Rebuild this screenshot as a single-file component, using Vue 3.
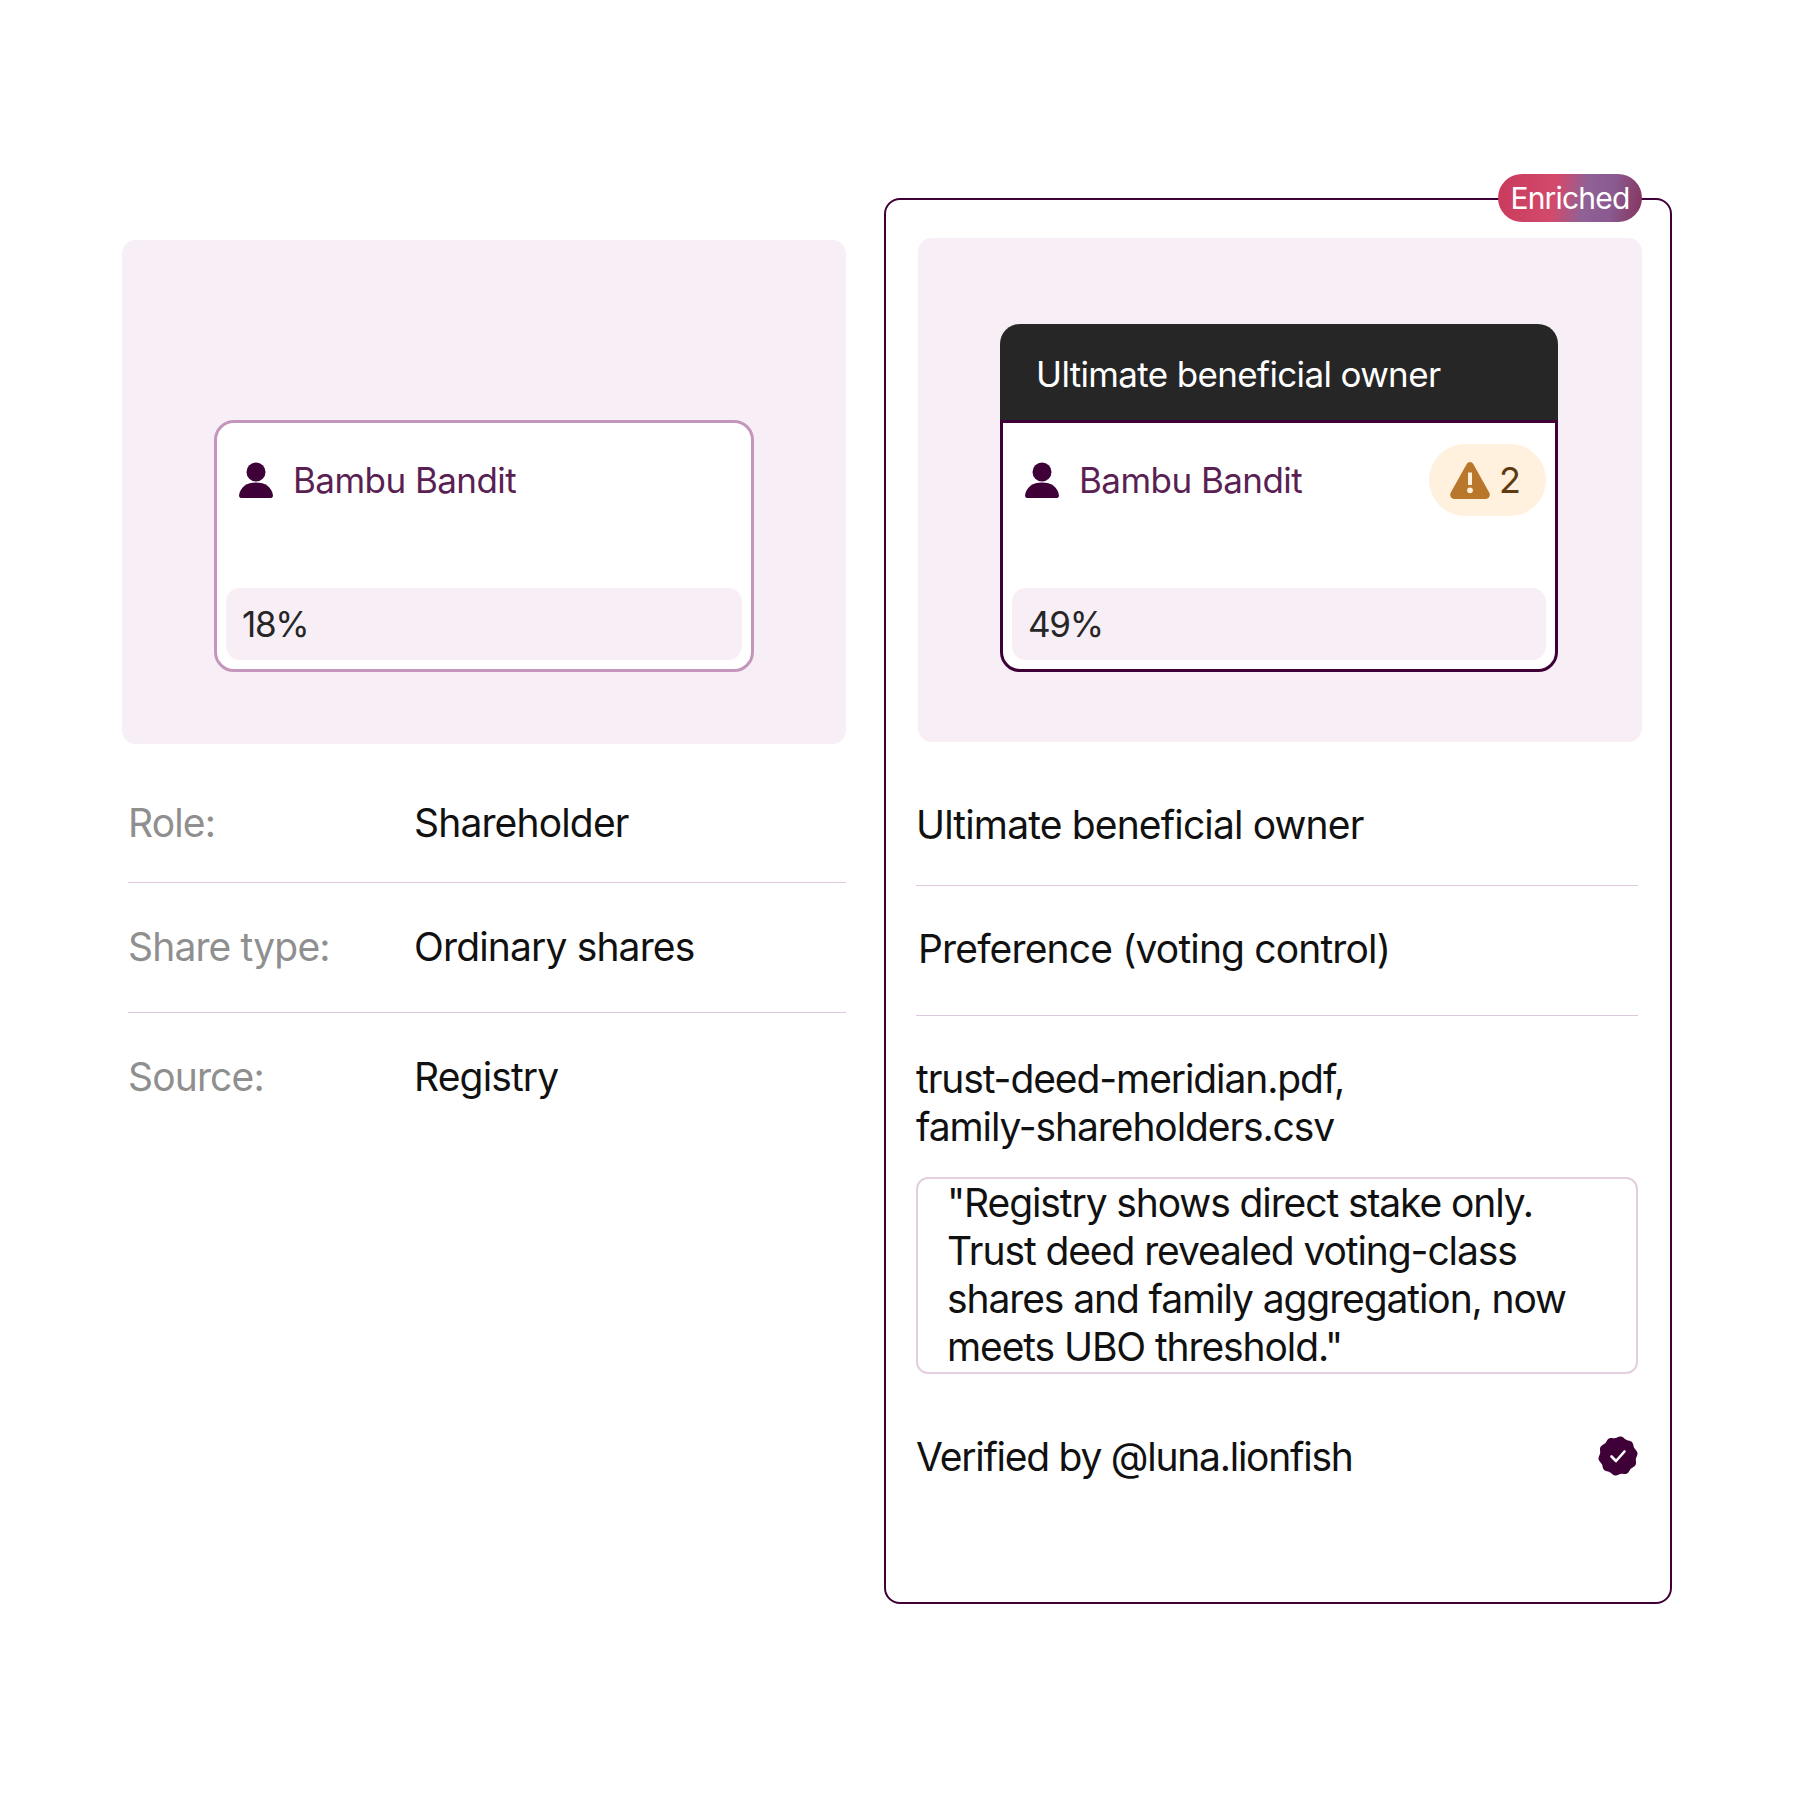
<script setup>
import { computed } from "vue";

// scalloped edge of the verified badge
const sealPath = computed(() => {
  const pts = [];
  for (let i = 0; i < 120; i++) {
    const a = (i / 120) * Math.PI * 2;
    const r = 18.9 + 0.8 * Math.cos(a * 10 + Math.PI / 2);
    pts.push((20 + r * Math.cos(a)).toFixed(2) + " " + (20 + r * Math.sin(a)).toFixed(2));
  }
  return "M" + pts.join("L") + "Z";
});

const rows = [
  { label: "Role:", value: "Shareholder" },
  { label: "Share type:", value: "Ordinary shares" },
  { label: "Source:", value: "Registry" },
];
</script>

<template>
  <div class="page">
    <div class="col-left">
      <div class="panel">
        <div class="card card-light">
          <div class="person">
            <svg class="person-icon" viewBox="0 0 34 36"><circle cx="17" cy="10" r="9.5" /><path d="M0 33.5C1 25 8 20.5 17 20.5S33 25 34 33.5C34 35 33 36 32 36H2C1 36 0 35 0 33.5Z" /></svg>
            <span class="name">Bambu Bandit</span>
          </div>
          <div class="share">18%</div>
        </div>
      </div>
      <div v-for="(row, i) in rows" :key="row.label" class="row" :class="'row-' + i">
        <span class="label">{{ row.label }}</span>
        <span class="value">{{ row.value }}</span>
      </div>
    </div>

    <div class="col-right">
      <span class="enriched">Enriched</span>
      <div class="panel panel-right">
        <div class="card-dark">
          <div class="card-head">Ultimate beneficial owner</div>
          <div class="card card-body">
            <div class="person">
              <svg class="person-icon" viewBox="0 0 34 36"><circle cx="17" cy="10" r="9.5" /><path d="M0 33.5C1 25 8 20.5 17 20.5S33 25 34 33.5C34 35 33 36 32 36H2C1 36 0 35 0 33.5Z" /></svg>
              <span class="name">Bambu Bandit</span>
              <span class="warn">
                <svg class="warn-icon" viewBox="0 0 40 37"><path fill-rule="evenodd" d="M16.6 2.2C18.2-.6 21.8-.6 23.4 2.2L39.2 30.6C40.8 33.4 39 37 35.8 37H4.2C1 37-.8 33.4.8 30.6ZM18 10.5V23H22V10.5ZM20 25.4A2.9 2.9 0 1 0 20 31.2 2.9 2.9 0 1 0 20 25.4Z" /></svg>
                2
              </span>
            </div>
            <div class="share">49%</div>
          </div>
        </div>
      </div>
      <div class="info info-first">Ultimate beneficial owner</div>
      <div class="info info-second">Preference (voting control)</div>
      <div class="files">trust-deed-meridian.pdf,<br />family-shareholders.csv</div>
      <div class="note">"Registry shows direct stake only. Trust deed revealed voting-class shares and family aggregation, now meets UBO threshold."</div>
      <div class="verified">
        <span>Verified by @luna.lionfish</span>
        <svg class="seal" viewBox="0 0 40 40">
          <path :d="sealPath" fill="#3f0037" />
          <path d="M13.5 20.5L18 25L26.5 15.5" fill="none" stroke="#fff" stroke-width="2.6" stroke-linecap="round" stroke-linejoin="round" />
        </svg>
      </div>
    </div>
  </div>
</template>

<style>
html, body {
  margin: 0;
  background: #fff;
}
</style>

<style scoped>
.page {
  width: 1800px;
  height: 1800px;
  box-sizing: border-box;
  padding: 198px 128px 0 122px;
  display: flex;
  align-items: flex-start;
  gap: 38px;
  font-family: Inter, "Liberation Sans", sans-serif;
  color: #111;
  letter-spacing: -0.85px;
}

.col-left {
  width: 724px;
  margin-top: 42px;
}

.panel {
  width: 724px;
  height: 504px;
  background: #f7eef6;
  border-radius: 14px;
  display: flex;
  align-items: flex-end;
  justify-content: center;
  padding-bottom: 72px;
  box-sizing: border-box;
}

.panel-right {
  padding-bottom: 70px;
}

.card {
  box-sizing: border-box;
  background: #fff;
  border-radius: 20px;
  border: 3px solid #c496bd;
  display: flex;
  flex-direction: column;
}

.card-light {
  width: 540px;
  height: 252px;
}

.card-dark {
  width: 558px;
  height: 348px;
  margin-right: 2px;
  display: flex;
  flex-direction: column;
}

.card-head {
  background: #262626;
  color: #fff;
  height: 96px;
  flex: none;
  border-radius: 20px 20px 0 0;
  padding: 30px 0 0 36px;
  box-sizing: border-box;
  font-size: 35px;
  letter-spacing: -0.65px;
  line-height: 40px;
}

.card-body {
  flex: 1;
  border-color: #3f0037;
  border-radius: 0 0 20px 20px;
}

.person {
  display: flex;
  align-items: center;
  height: 72px;
  padding: 21px 9px 0 22px;
}

.person-icon {
  width: 34px;
  height: 36px;
  fill: #3f0037;
  flex: none;
}

.name {
  margin-left: 20px;
  font-size: 35px;
  letter-spacing: -0.55px;
  color: #5a1f53;
}

.warn {
  margin-left: auto;
  width: 117px;
  height: 72px;
  box-sizing: border-box;
  padding-left: 21px;
  border-radius: 36px;
  background: #fff1de;
  color: #5e3a10;
  font-size: 36px;
  display: flex;
  align-items: center;
  gap: 9px;
}

.warn-icon {
  width: 40px;
  height: 37px;
  fill: #b8772a;
}

.share {
  margin: auto 9px 9px;
  height: 72px;
  border-radius: 14px;
  background: #f7eef6;
  color: #262626;
  font-size: 35px;
  letter-spacing: -1.3px;
  line-height: 72px;
  padding-left: 16px;
}

.row {
  display: flex;
  margin-left: 6px;
  font-size: 39px;
  line-height: 48px;
  border-bottom: 1px solid #dfc8dd;
}

.row:last-child {
  border-bottom: none;
}

.row-0 {
  padding: 55px 0 35px;
}

.row-1 {
  padding: 40px 0 41px;
}

.row-2 {
  padding: 40px 0 0;
}

.label {
  width: 286px;
  color: #8f8f8f;
}

.col-right {
  position: relative;
  box-sizing: border-box;
  width: 788px;
  height: 1406px;
  border: 2px solid #3f0037;
  border-radius: 16px;
  padding: 38px 28px 0 32px;
}

.enriched {
  position: absolute;
  top: -26px;
  right: 28px;
  width: 144px;
  height: 48px;
  border-radius: 24px;
  background: linear-gradient(100deg, #c93a5c 0%, #d24a6c 40%, #8f6196 60%, #8a5a90 78%, #86335c 100%);
  color: #fff;
  font-size: 30px;
  letter-spacing: -0.8px;
  line-height: 48px;
  text-align: center;
}

.info {
  font-size: 39px;
  line-height: 48px;
  border-bottom: 1px solid #dfc8dd;
  margin-right: 4px;
  margin-left: -2px;
}

.info-first {
  padding: 59px 0 36px;
}

.info-second {
  padding: 39px 0 42px 2px;
}

.files {
  font-size: 39px;
  letter-spacing: -1.1px;
  line-height: 48px;
  margin: 39px 0 26px -2px;
}

.note {
  box-sizing: border-box;
  width: 722px;
  height: 197px;
  margin-left: -2px;
  border: 2px solid #e2cfe0;
  border-radius: 12px;
  padding: 0 40px 0 29px;
  font-size: 39px;
  letter-spacing: -1.1px;
  line-height: 48px;
}

.verified {
  display: flex;
  justify-content: space-between;
  align-items: center;
  width: 722px;
  margin: 59px 0 0 -2px;
  font-size: 39px;
  letter-spacing: -1.25px;
  line-height: 48px;
}

.seal {
  width: 40px;
  height: 40px;
  margin-bottom: 2px;
}
</style>
